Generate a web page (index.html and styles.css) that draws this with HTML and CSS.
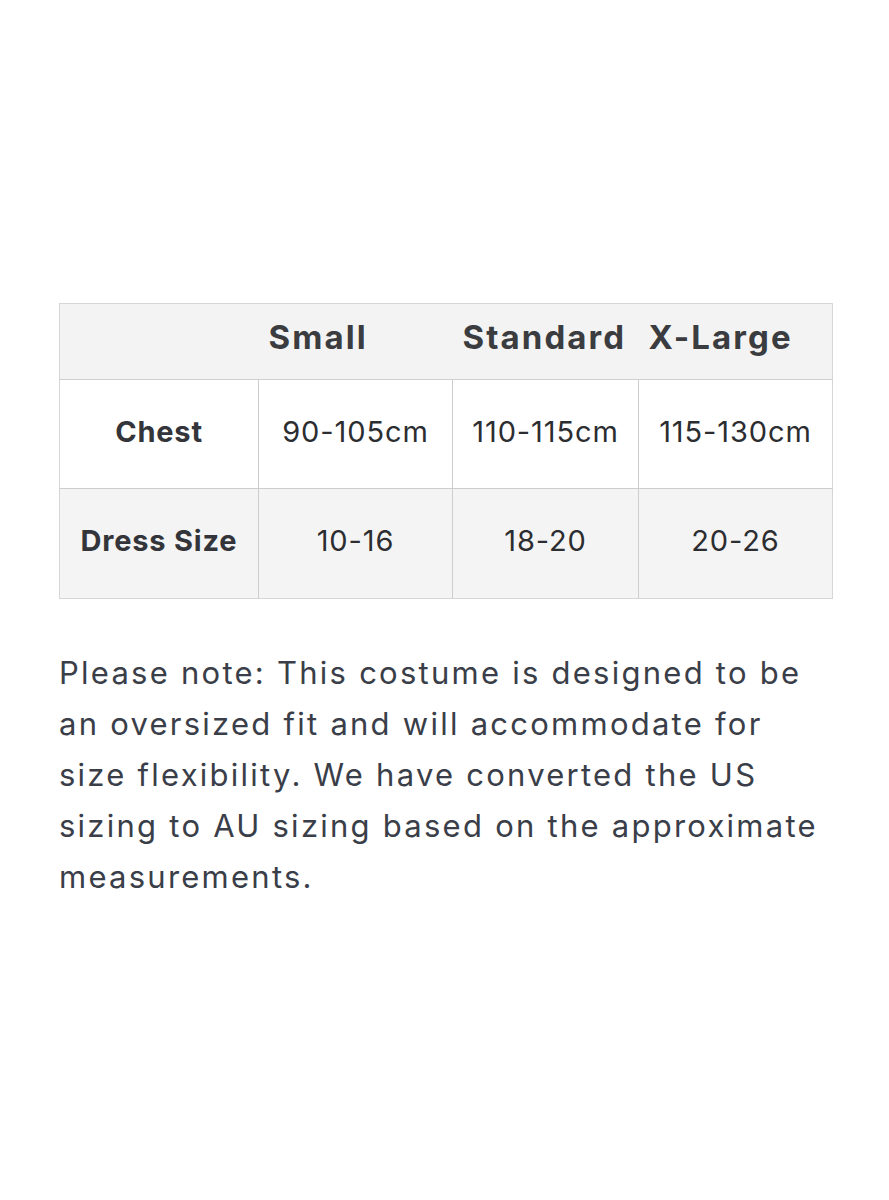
FILE: index.html
```html
<!DOCTYPE html>
<html lang="en">
<head>
<meta charset="utf-8">
<title>Size chart</title>
<link rel="stylesheet" href="styles.css">
</head>
<body>
<main class="page">
  <table class="sizes">
    <colgroup>
      <col class="c-label">
      <col class="c-small">
      <col class="c-standard">
      <col class="c-xl">
    </colgroup>
    <thead>
      <tr class="head-row">
        <th class="corner"></th>
        <th>Small</th>
        <th>Standard</th>
        <th>X-Large</th>
      </tr>
    </thead>
    <tbody>
      <tr class="row-white">
        <th class="label">Chest</th>
        <td>90-105cm</td>
        <td>110-115cm</td>
        <td>115-130cm</td>
      </tr>
      <tr class="row-grey">
        <th class="label">Dress Size</th>
        <td>10-16</td>
        <td>18-20</td>
        <td>20-26</td>
      </tr>
    </tbody>
  </table>
  <p class="note">Please note: This costume is designed to be an oversized fit and will accommodate for size flexibility. We have converted the US sizing to AU sizing based on the approximate measurements.</p>
</main>
</body>
</html>
```

FILE: styles.css
```css
html, body {
  margin: 0;
  padding: 0;
  background: #ffffff;
}

.page {
  padding: 303px 40px 0 59px;
  font-family: Inter, "Open Sans", sans-serif;
}

.sizes {
  width: 773px;
  border-collapse: collapse;
  table-layout: fixed;
  border: 1px solid #d6d6d6;
}

.c-label { width: 199px; }
.c-small { width: 194px; }
.c-standard { width: 186px; }
.c-xl { width: 194px; }

.sizes th,
.sizes td {
  padding: 0;
}

.head-row {
  height: 76px;
  background: #f3f3f3;
}

.head-row th {
  text-align: left;
  padding: 0 0 9px 10px;
  font-size: 33px;
  font-weight: 700;
  color: #3a3c3f;
  border-bottom: 1px solid #cfcfcf;
  letter-spacing: 2.1px;
  white-space: nowrap;
}

.head-row th.corner {
  padding: 0;
}

.row-white {
  height: 109px;
  background: #ffffff;
}

.row-grey {
  height: 110px;
  background: #f4f4f4;
}

.row-white td,
.row-white th,
.row-grey td,
.row-grey th {
  text-align: center;
  padding-bottom: 6px;
  border-right: 1px solid #cdcdcd;
  font-size: 29px;
  color: #2c2d31;
  white-space: nowrap;
}

.row-white td,
.row-white th {
  border-bottom: 1px solid #cdcdcd;
}

.sizes td:last-child {
  border-right: none;
}

.sizes td {
  font-weight: 400;
  letter-spacing: 0.9px;
}

.sizes th.label {
  font-weight: 700;
  font-size: 29px;
  letter-spacing: 0.8px;
  color: #33353a;
}

.note {
  margin: 48px 0 0 0;
  font-size: 31px;
  line-height: 51px;
  color: #3a3e48;
  width: 768px;
  letter-spacing: 2.25px;
}
```
